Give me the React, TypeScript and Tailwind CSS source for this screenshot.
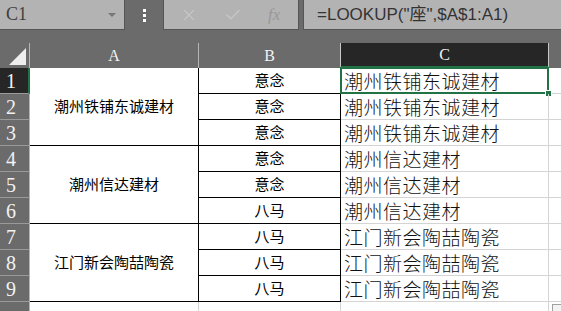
import React from "react";
import { X, Check } from "lucide-react";

const rows = [
  { b: "意念", c: "潮州铁铺东诚建材" },
  { b: "意念", c: "潮州铁铺东诚建材" },
  { b: "意念", c: "潮州铁铺东诚建材" },
  { b: "意念", c: "潮州信达建材" },
  { b: "意念", c: "潮州信达建材" },
  { b: "八马", c: "潮州信达建材" },
  { b: "八马", c: "江门新会陶喆陶瓷" },
  { b: "八马", c: "江门新会陶喆陶瓷" },
  { b: "八马", c: "江门新会陶喆陶瓷" },
];

const groups = ["潮州铁铺东诚建材", "潮州信达建材", "江门新会陶喆陶瓷"];

const cjk = "font-['Noto_Sans_CJK_SC',sans-serif]";
const serif = "font-['Liberation_Serif',serif]";

const App: React.FC = () => {
  return (
    <div className="w-[561px] h-[311px] overflow-hidden bg-[#6b6b6b] select-none">
      {/* Formula bar */}
      <div className="flex h-[30px]">
        <div className="w-[125px] bg-[#b3b3b3] border-r border-b border-[#555] flex items-center justify-between pl-[6px] pr-[8px]">
          <span className={`${serif} text-[18px] text-[#404040]`}>C1</span>
          <span className="w-0 h-0 border-l-[4px] border-r-[4px] border-t-[4px] border-l-transparent border-r-transparent border-t-[#777]" />
        </div>
        <div className="w-[38px] flex flex-col items-center justify-center gap-[2px] pt-[1px]">
          <span className="w-[3px] h-[3px] bg-white" />
          <span className="w-[3px] h-[3px] bg-white" />
          <span className="w-[3px] h-[3px] bg-white" />
        </div>
        <div className="w-[136px] bg-[#b3b3b3] border-l border-b border-r border-[#555] flex items-center pl-[16px] gap-[26px]">
          <X size={18} strokeWidth={1.5} className="text-[#c6c6c6]" />
          <Check size={18} strokeWidth={2} className="text-[#c6c6c6]" />
          <span className={`${serif} italic text-[17px] text-[#999]`}>fx</span>
        </div>
        <div className="w-[4px]" />
        <div className="flex-1 bg-[#b3b3b3] border-l border-b border-[#555] flex items-center pl-[13px]">
          <span className={`font-['Liberation_Sans','Noto_Sans_CJK_SC',sans-serif] text-[17px] text-[#333]`}>
            =LOOKUP("座",$A$1:A1)
          </span>
        </div>
      </div>
      <div className="h-[13px]" />

      {/* Sheet */}
      <div className="grid grid-cols-[30px_169px_142px_208px_1fr] grid-rows-[25px_repeat(10,26px)] bg-white">
        {/* header row */}
        <div className="bg-[#6b6b6b] border-r border-[#b5b5b5] relative flex items-end justify-end p-[3px]">
          <span className="w-0 h-0 border-l-[17px] border-b-[17px] border-l-transparent border-b-[#eeeeee]" />
        </div>
        <div className={`bg-[#6b6b6b] border-r border-[#b5b5b5] flex items-center justify-center ${serif} text-[16px] text-[#f2f2f2]`}>A</div>
        <div className={`bg-[#6b6b6b] border-r border-[#b5b5b5] flex items-center justify-center ${serif} text-[16px] text-[#f2f2f2]`}>B</div>
        <div className={`bg-[#262626] border-l border-r border-[#c8c8c8] border-b-2 border-b-[#217346] -ml-px flex items-center justify-center ${serif} text-[16px] text-[#f2f2f2]`}>C</div>
        <div className="bg-[#6b6b6b]" />

        {/* row headers */}
        {Array.from({ length: 10 }, (_, i) => (
          <div
            key={`rh${i}`}
            style={{ gridRow: i + 2, gridColumn: 1 }}
            className={`${serif} text-[20px] text-[#f2f2f2] flex items-center pl-[6px] border-b ${
              i === 0
                ? "bg-[#262626] border-r-2 border-r-[#217346] border-b-[#9a9a9a]"
                : "bg-[#6b6b6b] border-r border-r-[#b5b5b5] border-b-[#9a9a9a]"
            }`}
          >
            {i < 9 ? i + 1 : ""}
          </div>
        ))}

        {/* merged A */}
        {groups.map((g, i) => (
          <div
            key={g}
            style={{ gridRow: `${i * 3 + 2} / span 3`, gridColumn: 2 }}
            className={`${cjk} text-[15px] text-black flex items-center justify-center border-r border-b border-black`}
          >
            {g}
          </div>
        ))}

        {/* B and C */}
        {rows.map((r, i) => (
          <React.Fragment key={i}>
            <div
              style={{ gridRow: i + 2, gridColumn: 3 }}
              className={`${cjk} text-[15px] text-black flex items-center justify-center border-r border-b border-black`}
            >
              {r.b}
            </div>
            <div
              style={{ gridRow: i + 2, gridColumn: 4 }}
              className={`${cjk} font-light text-[19px] tracking-[0.5px] leading-none text-[#111] flex items-center pl-[3px] border-r border-b border-[#d4d4d4] relative`}
            >
              {r.c}
              {i === 0 && (
                <>
                  <span className="absolute -left-px -top-px -right-px -bottom-px border-2 border-[#217346]" />
                  <span className="absolute -right-[4px] -bottom-[4px] w-[7px] h-[7px] bg-[#217346] border border-white" />
                </>
              )}
            </div>
            <div
              style={{ gridRow: i + 2, gridColumn: 5 }}
              className="border-b border-[#d4d4d4]"
            />
          </React.Fragment>
        ))}

        {/* row 10 */}
        <div style={{ gridRow: 11, gridColumn: 2 }} className="border-r border-[#d4d4d4]" />
        <div style={{ gridRow: 11, gridColumn: 3 }} className="border-r border-[#d4d4d4]" />
        <div style={{ gridRow: 11, gridColumn: 4 }} className="border-r border-[#d4d4d4]" />
        <div style={{ gridRow: 11, gridColumn: 5 }} className="relative">
          <span className="absolute left-[3px] top-[2px] w-[14px] h-[14px] bg-[#f3f3f3] border border-[#a0a0a0]" />
        </div>
      </div>
    </div>
  );
};

export default App;
